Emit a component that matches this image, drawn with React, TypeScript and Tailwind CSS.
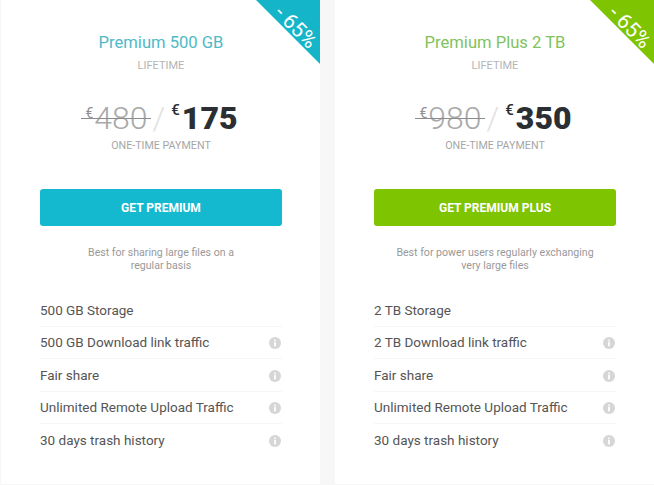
import React from 'react';

interface PlanProps {
  title: string;
  oldPrice: string;
  price: string;
  cta: string;
  blurb: string[];
  features: string[];
  titleColor: string;
  buttonColor: string;
  badgeColor: string;
}

const InfoDot: React.FC = () => (
  <svg viewBox="0 0 12 12" className="w-3 h-3 shrink-0 -translate-x-px translate-y-px">
    <circle cx="6" cy="6" r="6" fill="#d6d6d6" />
    <rect x="5.1" y="5" width="1.8" height="4.4" fill="#fff" />
    <rect x="5.1" y="2.6" width="1.8" height="1.6" fill="#fff" />
  </svg>
);

const PlanCard: React.FC<PlanProps> = ({ title, oldPrice, price, cta, blurb, features, titleColor, buttonColor, badgeColor }) => (
  <div className="relative w-[319px] h-[484px] shrink-0 bg-white overflow-hidden pl-[39px] pr-[38px] flex flex-col">
    {/* Corner ribbon */}
    <div className={`absolute top-0 right-0 w-[64px] h-[64px] [clip-path:polygon(0_0,100%_0,100%_100%)] ${badgeColor}`} />
    <div className="absolute top-[19px] right-[-1px] w-[50px] flex justify-center rotate-45 text-white text-[21px] leading-[16px] whitespace-nowrap">
      - 65%
    </div>

    <div className={`mt-[32px] text-center text-[16.6px] leading-[22px] ${titleColor}`}>{title}</div>
    <div className="mt-[4px] text-center text-[11px] leading-[16px] text-[#b4b4b4]">LIFETIME</div>

    {/* Price */}
    <div className="mt-[24px] h-[40px] flex items-center justify-center pl-[1px]">
      <span className="relative flex items-start text-[#a9a9a9]">
        <span className="text-[14px] leading-[20px] mt-[5px] mr-[1px] text-[#8f8f8f]">€</span>
        <span className="text-[32px] leading-[40px] font-light">{oldPrice}</span>
        <span className="absolute left-[-4px] right-[-3px] top-[20px] h-px bg-[#8c8c8c]" />
      </span>
      <span className="text-[32px] leading-[40px] font-light text-[#e2e2e2] ml-[5px] mr-[8px]">/</span>
      <span className="flex items-start text-[#2b2f33]">
        <span className="text-[15px] leading-[20px] mt-[2px] mr-[2px] -ml-[2px] font-medium">€</span>
        <span className="text-[32px] leading-[40px] font-black">{price}</span>
      </span>
    </div>
    <div className="mt-0 text-center text-[10.7px] leading-[16px] text-[#a6a6a6]">ONE-TIME PAYMENT</div>

    <button className={`mt-[35px] h-[37px] w-full shrink-0 rounded-[3px] text-white text-[12px] font-bold ${buttonColor}`}>{cta}</button>

    <div className="mt-[20px] text-center text-[10.6px] leading-[13px] text-[#999999]">
      {blurb.map((line) => (
        <div key={line}>{line}</div>
      ))}
    </div>

    {/* Feature list */}
    <div className="mt-[22px] flex flex-col">
      {features.map((f, i) => (
        <div key={f} className="h-[32.5px] flex items-center justify-between border-b border-[#f6f6f6] last:border-b-0 text-[13.5px] text-[#555555]">
          <span>{f}</span>
          {i > 0 && <InfoDot />}
        </div>
      ))}
    </div>
  </div>
);

export default function App() {
  return (
    <div className="w-[654px] h-[485px] overflow-hidden bg-[#f7f7f7] flex gap-[15px] pl-px font-['Roboto',sans-serif]">
      <PlanCard
        title="Premium 500 GB"
        oldPrice="480"
        price="175"
        cta="GET PREMIUM"
        blurb={['Best for sharing large files on a', 'regular basis']}
        features={['500 GB Storage', '500 GB Download link traffic', 'Fair share', 'Unlimited Remote Upload Traffic', '30 days trash history']}
        titleColor="text-[#4fb9c6]"
        buttonColor="bg-[#15b9cf]"
        badgeColor="bg-[#15b5c9]"
      />
      <PlanCard
        title="Premium Plus 2 TB"
        oldPrice="980"
        price="350"
        cta="GET PREMIUM PLUS"
        blurb={['Best for power users regularly exchanging', 'very large files']}
        features={['2 TB Storage', '2 TB Download link traffic', 'Fair share', 'Unlimited Remote Upload Traffic', '30 days trash history']}
        titleColor="text-[#7fc35c]"
        buttonColor="bg-[#7fc400]"
        badgeColor="bg-[#7fc400]"
      />
    </div>
  );
}
